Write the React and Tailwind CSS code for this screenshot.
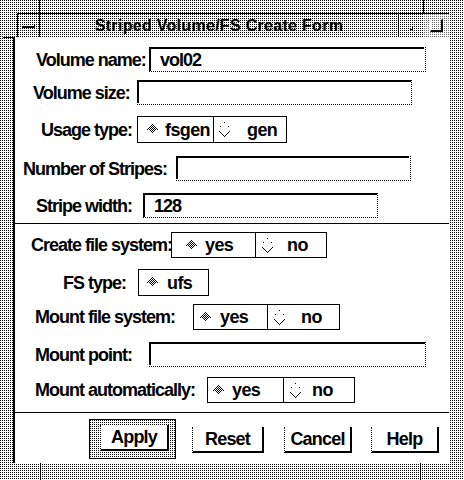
import React from "react";

const D = "bg-[linear-gradient(transparent_1px,#fff_1px),linear-gradient(90deg,#000_1px,#fff_1px)] bg-[length:2px_2px]";

function Sel() {
  const n = 5;
  const px = [];
  for (let y = 0; y <= 2 * n; y++) {
    const half = n - Math.abs(y - n);
    for (let x = n - half; x <= n + half; x++) {
      const edge = x === n - half || x === n + half;
      if (y <= n && edge) px.push([x, y]);
      else if (!edge && (x + y) % 2 === 1) px.push([x, y]);
    }
  }
  return (
    <svg width={11} height={11} shapeRendering="crispEdges" className="shrink-0">
      {px.map(([x, y]) => (
        <rect key={x + "-" + y} x={x} y={y} width={1} height={1} fill="#000" />
      ))}
    </svg>
  );
}

function Unsel() {
  const n = 7;
  const px = [];
  for (let y = 0; y <= 2 * n; y++) {
    const half = n - Math.abs(y - n);
    const xs = half === 0 ? [n] : [n - half, n + half];
    for (const x of xs) {
      if (y < n) {
        if (y % 4 === 0) px.push([x, y]);
      } else if (y > n + 1) px.push([x, y]);
    }
  }
  return (
    <svg width={15} height={15} shapeRendering="crispEdges" className="shrink-0">
      {px.map(([x, y]) => (
        <rect key={x + "-" + y} x={x} y={y} width={1} height={1} fill="#000" />
      ))}
    </svg>
  );
}

function Input({ cls, value }) {
  return (
    <div className={`${cls} ${D} pr-[2px] pb-[2px] flex`}>
      <div className="flex-1 bg-white border-t-2 border-l-2 border-black flex items-center pl-[9px] text-[18px] tracking-[-1px] leading-none">
        {value}
      </div>
    </div>
  );
}

function Row({ cls, lcls, label, children }) {
  return (
    <div className={`flex items-center shrink-0 ${cls}`}>
      <div className={`shrink-0 text-[18px] tracking-[-1px] leading-none whitespace-nowrap ${lcls}`}>{label}</div>
      {children}
    </div>
  );
}

function Btn({ cls, children }) {
  return (
    <div className={`bg-white flex items-center justify-center text-[18px] tracking-[-0.8px] leading-none border-l border-r-2 border-b-2 border-black [border-left-style:dotted] ${cls}`}>
      {children}
    </div>
  );
}

const OPT = "flex border border-black text-[18px] tracking-[-0.6px] leading-none";

export default function App() {
  return (
    <div className={`w-[464px] h-[480px] flex flex-col overflow-hidden font-['Liberation_Sans',Arial,sans-serif] font-bold text-black ${D}`}>
      {/* top frame */}
      <div className="h-[13px] flex shrink-0">
        <div className="w-[39px]" />
        <div className="w-px bg-black" />
        <div className="w-[383px]" />
        <div className="w-px bg-black" />
      </div>
      <div className="flex h-[450px] shrink-0">
        {/* left frame */}
        <div className="w-[13px] flex flex-col">
          <div className="h-[24px]" />
          <div className="h-px w-[10px] ml-[3px] bg-black" />
        </div>
        <div className="w-[436px] flex flex-col">
          {/* title bar */}
          <div className="h-[24px] flex pl-[4px] shrink-0">
            <div className="flex-1 flex border-t border-l border-black">
              <div className="w-[22px] flex items-center justify-center border-r border-black">
                <div className="w-[13px] h-[3px] border-b-2 border-r border-black mt-[2px]" />
              </div>
              <div className="flex-1 flex items-center justify-center text-[16px] leading-none tracking-[0.3px]">
                Striped Volume/FS Create Form
              </div>
              <div className="w-[26px] border-l border-black flex items-center justify-center">
                <div className="w-[3px] h-[3px] border-b border-r border-black mt-[6px]" />
              </div>
              <div className="w-[25px] bg-white/40 flex items-center justify-center">
                <div className="w-[13px] h-[13px] border-b-2 border-r-2 border-black border-t border-l border-t-white border-l-white" />
              </div>
            </div>
          </div>
          {/* client */}
          <div className="h-[426px] bg-white border-l-2 border-black flex flex-col">
            <Row cls="mt-[10px] h-[26px]" lcls="ml-[21px] w-[113px]" label="Volume name:">
              <Input cls="w-[277px] h-[26px]" value="vol02" />
            </Row>
            <Row cls="mt-[7px] h-[25px]" lcls="ml-[18px] w-[104px]" label="Volume size:">
              <Input cls="w-[276px] h-[25px]" value="" />
            </Row>
            <Row cls="mt-[11px] h-[27px]" lcls="ml-[26px] w-[96px]" label="Usage type:">
              <div className={`w-[150px] h-[27px] ${OPT}`}>
                <div className="w-[76px] flex items-center pl-[9px] gap-[7px] border-r border-black"><Sel />fsgen</div>
                <div className="flex-1 flex items-center pl-[3px] gap-[15px]"><Unsel />gen</div>
              </div>
            </Row>
            <Row cls="mt-[13px] h-[25px]" lcls="ml-[8px] w-[153px]" label="Number of Stripes:">
              <Input cls="w-[235px] h-[25px]" value="" />
            </Row>
            <Row cls="mt-[12px] h-[26px]" lcls="ml-[21px] w-[107px]" label="Stripe width:">
              <Input cls="w-[236px] h-[26px]" value="128" />
            </Row>
            <div className="mt-[4px] h-px bg-black shrink-0" />
            <Row cls="mt-[8px] h-[26px]" lcls="ml-[16px] w-[140px]" label="Create file system:">
              <div className={`w-[156px] h-[26px] ${OPT}`}>
                <div className="w-[84px] flex items-center pl-[14px] gap-[8px] border-r border-black"><Sel />yes</div>
                <div className="flex-1 flex items-center pl-[4px] gap-[12px]"><Unsel />no</div>
              </div>
            </Row>
            <Row cls="mt-[11px] h-[27px]" lcls="ml-[48px] w-[75px]" label="FS type:">
              <div className={`w-[71px] h-[27px] ${OPT}`}>
                <div className="flex-1 flex items-center pl-[8px] gap-[9px]"><Sel />ufs</div>
              </div>
            </Row>
            <Row cls="mt-[8px] h-[26px]" lcls="ml-[20px] w-[158px]" label="Mount file system:">
              <div className={`w-[147px] h-[26px] ${OPT}`}>
                <div className="w-[74px] flex items-center pl-[6px] gap-[9px] border-r border-black"><Sel />yes</div>
                <div className="flex-1 flex items-center pl-[4px] gap-[14px]"><Unsel />no</div>
              </div>
            </Row>
            <Row cls="mt-[12px] h-[25px]" lcls="ml-[20px] w-[114px]" label="Mount point:">
              <Input cls="w-[278px] h-[25px]" value="" />
            </Row>
            <Row cls="mt-[10px] h-[26px]" lcls="ml-[20px] w-[172px]" label="Mount automatically:">
              <div className={`w-[148px] h-[26px] ${OPT}`}>
                <div className="w-[76px] flex items-center pl-[5px] gap-[8px] border-r border-black"><Sel />yes</div>
                <div className="flex-1 flex items-center pl-[4px] gap-[9px]"><Unsel />no</div>
              </div>
            </Row>
            <div className="mt-[9px] h-px bg-black shrink-0" />
            <div className="mt-[6px] flex items-start shrink-0">
              <div className={`ml-[74px] w-[87px] h-[40px] border border-black pl-[10px] pt-[5px] ${D}`}>
                <Btn cls="w-[69px] h-[26px]">Apply</Btn>
              </div>
              <Btn cls="ml-[16px] mt-[8px] w-[72px] h-[26px]">Reset</Btn>
              <Btn cls="ml-[20px] mt-[8px] w-[68px] h-[26px]">Cancel</Btn>
              <Btn cls="ml-[19px] mt-[8px] w-[68px] h-[26px]">Help</Btn>
            </div>
          </div>
        </div>
        <div className="w-[15px]" />
      </div>
      {/* bottom frame */}
      <div className="h-[17px] flex shrink-0">
        <div className="w-[40px]" />
        <div className="w-px bg-black" />
        <div className="w-[379px]" />
        <div className="w-px bg-black" />
      </div>
    </div>
  );
}
